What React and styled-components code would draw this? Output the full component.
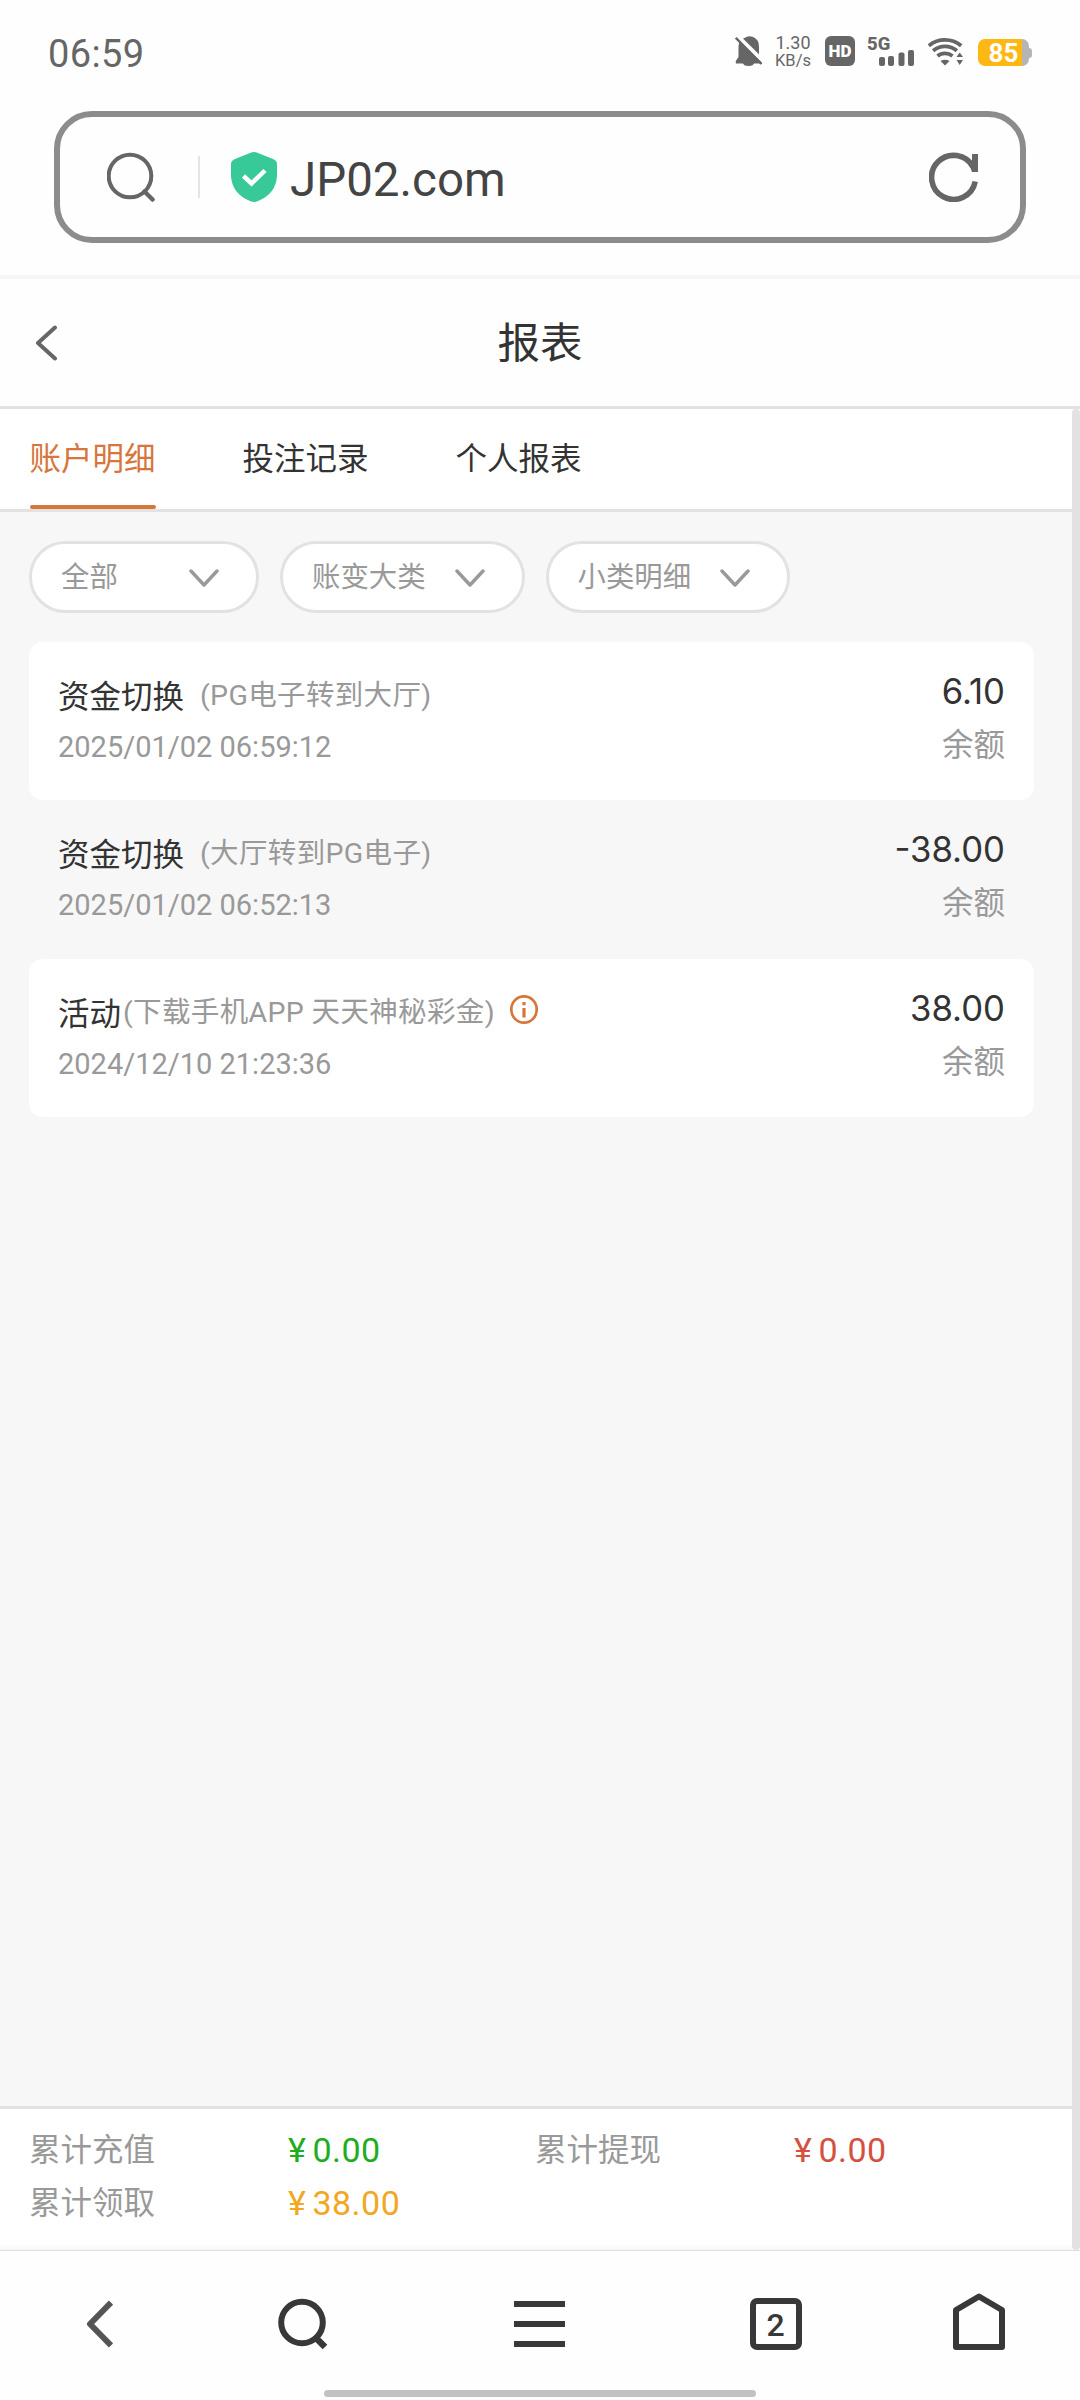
import React, { useState } from 'react';
import styled, { createGlobalStyle } from 'styled-components';

const GlobalStyle = createGlobalStyle`
    * {
        box-sizing: border-box;
    }
    body {
        margin: 0;
        background-color: #fefefe;
        font-family: Roboto, "Noto Sans CJK SC", sans-serif;
    }
    svg {
        display: block;
        flex-shrink: 0;
    }
    button {
        border: 0;
        padding: 0;
        background: none;
        font-family: inherit;
        cursor: pointer;
    }
`;

const Screen = styled.div`
    display: flex;
    flex-direction: column;
    width: 1080px;
    height: 2400px;
    overflow: hidden;
    white-space: nowrap;
`;

//Status bar
const StatusBar = styled.div`
    display: flex;
    justify-content: space-between;
    align-items: center;
    height: 102px;
    padding: 0 48px 0 48px;
    color: #666;
`;

const Clock = styled.div`
    padding-top: 5px;
    font-size: 38px;
    line-height: 40px;
    letter-spacing: 0.4px;
`;

const StatusIcons = styled.div`
    display: flex;
    align-items: center;
`;

const NetSpeed = styled.div`
    width: 38px;
    margin: 0 13px 0 11px;
    text-align: center;
    font-size: 16.5px;
    line-height: 17px;
    .speed-value {
        font-size: 18px;
        line-height: 18px;
    }
`;

const HdBadge = styled.div`
    width: 30px;
    height: 30px;
    margin-right: 12px;
    border-radius: 6px;
    background-color: #666;
    color: white;
    text-align: center;
    font-size: 17px;
    font-weight: 900;
    line-height: 31px;
`;

const Signal = styled.div`
    display: flex;
    flex-direction: column;
    align-items: flex-end;
    width: 47px;
    height: 30px;
    margin-right: 14px;
    .signal-type {
        align-self: flex-start;
        height: 14px;
        font-size: 18.5px;
        font-weight: 800;
        line-height: 16px;
    }
`;

const Battery = styled.div`
    display: flex;
    align-items: center;
    margin: 3px 0 0 14px;
    .battery-body {
        width: 51px;
        height: 27px;
        border-radius: 7px;
        background: linear-gradient(to right, #fdb813 44px, #b5b5b5 44px);
        color: white;
        text-align: center;
        font-size: 26px;
        font-weight: 700;
        line-height: 29px;
    }
    .battery-cap {
        width: 3px;
        height: 10px;
        border-radius: 0 3px 3px 0;
        background-color: #b5b5b5;
    }
`;

//Address bar
const AddressBar = styled.div`
    display: flex;
    align-items: center;
    flex-shrink: 0;
    height: 132px;
    margin: 9px 54px 32px;
    padding: 0 41px 0 47px;
    border: 6px solid #8c8c8c;
    border-radius: 38px;
`;

const Divider = styled.div`
    width: 2px;
    height: 42px;
    margin: 0 31px 0 43px;
    background-color: #e4e4e4;
`;

const Url = styled.div`
    flex: 1;
    padding: 6px 0 0 13px;
    color: #444;
    font-size: 47.5px;
    line-height: 56px;
`;

//Page
const PageHeader = styled.div`
    display: grid;
    grid-template-columns: 1fr auto 1fr;
    align-items: center;
    flex-shrink: 0;
    height: 134px;
    padding: 0 35px;
    border-top: 4px solid #f5f5f5;
    border-bottom: 3px solid #e2e2e2;
    color: #333;
    font-size: 42.5px;
    line-height: 50px;
    .page-title {
        padding-top: 2px;
    }
`;

const Page = styled.div`
    display: flex;
    flex: 1;
    min-height: 0;
`;

const PageBody = styled.div`
    display: flex;
    flex-direction: column;
    width: 1072px;
    background-color: #f7f7f7;
`;

const ScrollTrack = styled.div`
    width: 8px;
    border-radius: 4px;
    background-color: #e2e2e2;
`;

const Tabs = styled.div`
    display: flex;
    gap: 87px;
    height: 103px;
    padding-left: 29.5px;
    border-bottom: 3px solid #e2e2e2;
    background-color: #fff;
`;

const Tab = styled.button`
    display: flex;
    flex-direction: column;
    justify-content: space-between;
    height: 100px;
    padding-top: 31px;
    color: ${props => props.$active ? '#d6763b' : '#333'};
    font-size: 31.5px;
    line-height: 40px;
    &::after {
        content: "";
        width: 100%;
        height: 4px;
        border-radius: 2px;
        background-color: ${props => props.$active ? '#d6763b' : 'transparent'};
    }
`;

const Filters = styled.div`
    display: flex;
    gap: 21px;
    padding: 29px 29px 0;
`;

const Filter = styled.button`
    display: flex;
    justify-content: space-between;
    align-items: center;
    width: ${props => props.$width}px;
    height: 72px;
    padding: 1px 37px 0 29px;
    border: 3px solid #e2e2e2;
    border-radius: 36px;
    background-color: #fff;
    color: #999;
    font-size: 28.4px;
    line-height: 36px;
`;

const RecordList = styled.div`
    flex: 1;
    padding: 29px 38px 0 29px;
`;

const Record = styled.div`
    display: flex;
    justify-content: space-between;
    height: 158.3px;
    padding: 0 29px;
    border-radius: 14px;
    background-color: ${props => props.$plain ? 'transparent' : '#fff'};
    color: #999;
`;

const RecordInfo = styled.div`
    padding-top: 36px;
    font-size: 29px;
    line-height: 36px;
`;

const RecordTitle = styled.div`
    display: flex;
    height: 40px;
    margin-bottom: 11px;
    .record-name {
        color: #333;
        font-size: 31.5px;
        line-height: 40px;
    }
    .record-note {
        margin-left: ${props => props.$tight ? 2 : 16}px;
        font-size: 28.5px;
        letter-spacing: 0.35px;
    }
    svg {
        margin: 0 0 0 15px;
    }
`;

const RecordAmount = styled.div`
    padding-top: 29px;
    text-align: right;
    font-size: 31.5px;
    line-height: 40px;
    .record-value {
        margin-bottom: 15px;
        color: #333;
        font-family: Inter, sans-serif;
        font-size: 34.7px;
    }
`;

const Summary = styled.div`
    display: grid;
    grid-template-columns: repeat(4, 253px);
    align-content: start;
    row-gap: 13px;
    height: 144px;
    padding: 22px 0 0 29px;
    border-top: 3px solid #e2e2e2;
    background-color: #fff;
    box-shadow: inset 0 -8px 6px -6px rgba(0, 0, 0, 0.05);
    color: #999;
    font-size: 31.5px;
    line-height: 40px;
`;

const Money = styled.div`
    padding-left: 6px;
    color: ${props => props.$color};
    font-size: 34px;
    line-height: 38px;
    letter-spacing: 0.5px;
    .yen {
        margin-right: 6px;
    }
`;

//Browser toolbar
const Toolbar = styled.div`
    flex-shrink: 0;
    display: flex;
    flex-direction: column;
    justify-content: space-between;
    align-items: center;
    height: 150px;
    padding-bottom: 3px;
    border-top: 1px solid #dedede;
`;

const ToolbarButtons = styled.div`
    display: grid;
    grid-template-columns: 197px 211px 262px 211px 195px;
    align-items: center;
    justify-items: center;
    width: 100%;
    padding-top: 47px;
    svg:last-child {
        margin-top: -5px;
    }
`;

const TabCount = styled.button`
    width: 52px;
    height: 52px;
    border: 6px solid #383838;
    border-radius: 7px;
    color: #383838;
    font-size: 32px;
    font-weight: 500;
    line-height: 42px;
`;

const HomeIndicator = styled.div`
    width: 432px;
    height: 7px;
    border-radius: 4px;
    background-color: #c2c2c2;
`;

const BellOff = () => (
    <svg width="28" height="30" viewBox="0 0 28 30">
        <path d="M11 1.2Q14 -0.4 18 1Q24 3.5 24 10.500V19L27 24V27.500H19Q18 30 13.500 30T8 27.500H0.800V25L3.500 21V10Q3.500 4 11 1.200Z" fill="#666" />
        <path d="M1.500 -1L30 27" stroke="#fefefe" strokeWidth="4" />
        <path d="M0.800 1.800L26.500 28" stroke="#666" strokeWidth="2.400" />
    </svg>
);

const SignalBars = () => (
    <svg width="35" height="16" viewBox="0 0 35 16" fill="#666">
        <rect x="0" y="7" width="6" height="9" rx="2" />
        <rect x="9" y="6" width="6" height="10" rx="2" />
        <rect x="19.500" y="2.500" width="6" height="13.500" rx="2" />
        <rect x="29" y="0" width="6" height="16" rx="2" />
    </svg>
);

const Wifi = () => (
    <svg width="36" height="30" viewBox="0 0 36 30">
        <g fill="none" stroke="#666" strokeWidth="3.800">
            <path d="M0.800 9.700A25.200 25.200 0 0 1 33.200 9.700" />
            <path d="M5.100 14.800A18.500 18.500 0 0 1 28.900 14.800" />
            <path d="M9.500 20A11.700 11.700 0 0 1 24.500 20" />
        </g>
        <path d="M12.500 25Q17 22.500 21.500 25L17 29.500Z" fill="#666" />
        <path d="M27 21L31.500 14L37 21V24L31.500 31L27 24Z" fill="#fefefe" />
        <path d="M28.500 21L31.700 16.500L35 21ZM28.500 24L31.700 29L35 24Z" fill="#666" />
    </svg>
);

const SearchThin = () => (
    <svg width="48" height="50" viewBox="0 0 48 50" fill="none" stroke="#666" strokeWidth="4">
        <circle cx="23" cy="24" r="21.300" />
        <path d="M37.500 39.500L45.500 47.500" strokeWidth="4.500" strokeLinecap="round" />
    </svg>
);

const Shield = () => (
    <svg width="46" height="50" viewBox="0 0 46 50" fill="none">
        <path d="M19 1Q23 -0.800 27 1L42 7Q46 8.500 46 12V24Q45 42 26.500 49.200Q23 50.600 19.500 49.200Q1 42 0 24V12Q0 8.500 4 7Z" fill="#38c998" />
        <path d="M12.500 24L20.500 31.500L34 18.500" stroke="#fff" strokeWidth="4.500" />
    </svg>
);

const Reload = () => (
    <svg width="50" height="50" viewBox="0 0 50 50">
        <path d="M46.200 29.500A22 22 0 1 1 44 15" fill="none" stroke="#666" strokeWidth="5.600" />
        <path d="M43 2H49V20H43L40 12L43 10Z" fill="#666" />
    </svg>
);

const Back = () => (
    <svg width="22" height="36" viewBox="0 0 22 36" fill="none" stroke="#666" strokeWidth="4" strokeLinecap="round" strokeLinejoin="round">
        <path d="M20 2.500L3 18L20 33.500" />
    </svg>
);

const Chevron = () => (
    <svg width="30" height="18" viewBox="0 0 30 18" fill="none" stroke="#999" strokeWidth="3.400" strokeLinecap="round" strokeLinejoin="round">
        <path d="M2 2L15 16L28 2" />
    </svg>
);

const Info = () => (
    <svg width="28" height="30" viewBox="0 0 28 30" fill="none" stroke="#d6763b" strokeWidth="2.700">
        <ellipse cx="14" cy="14.500" rx="12.700" ry="13.200" />
        <path d="M14 7V10.300M14 13V22.500" strokeWidth="3.200" />
    </svg>
);

const NavBack = () => (
    <svg width="28" height="48" viewBox="0 0 28 48" fill="none" stroke="#555" strokeWidth="6" strokeLinejoin="round">
        <path d="M26 2.500L5 24L26 45.500" />
    </svg>
);

const NavSearch = () => (
    <svg width="50" height="52" viewBox="0 0 50 52" fill="none" stroke="#383838" strokeWidth="6">
        <circle cx="24" cy="24.500" r="20.800" />
        <path d="M38 40L47 49" strokeWidth="6.500" />
    </svg>
);

const NavMenu = () => (
    <svg width="51" height="46" viewBox="0 0 51 46" fill="#383838">
        <rect width="51" height="6" />
        <rect y="20" width="51" height="6" />
        <rect y="40" width="51" height="6" />
    </svg>
);

const NavHome = () => (
    <svg width="52" height="57" viewBox="0 0 52 57" fill="none" stroke="#383838" strokeWidth="6" strokeLinejoin="round">
        <path d="M26 3.500L49 17V54H3V17Z" />
    </svg>
);

const tabs = ['账户明细', '投注记录', '个人报表'];

const filters = [
    { label: '全部', width: 230 },
    { label: '账变大类', width: 244.5 },
    { label: '小类明细', width: 244.5 },
];

const records = [
    { name: '资金切换', note: '(PG电子转到大厅)', time: '2025/01/02 06:59:12', amount: '6.10' },
    { name: '资金切换', note: '(大厅转到PG电子)', time: '2025/01/02 06:52:13', amount: '-38.00' },
    { name: '活动', note: '(下载手机APP 天天神秘彩金)', time: '2024/12/10 21:23:36', amount: '38.00', info: true },
];

const totals = [
    { label: '累计充值', value: '0.00', color: '#1dad1d' },
    { label: '累计提现', value: '0.00', color: '#d4513f' },
    { label: '累计领取', value: '38.00', color: '#f2a722' },
];

const App = () => {
    const [active, setActive] = useState(0);

    return (
        <Screen>
            <GlobalStyle />
            <StatusBar>
                <Clock>06:59</Clock>
                <StatusIcons>
                    <BellOff />
                    <NetSpeed>
                        <div className="speed-value">1.30</div>
                        <div>KB/s</div>
                    </NetSpeed>
                    <HdBadge>HD</HdBadge>
                    <Signal>
                        <span className="signal-type">5G</span>
                        <SignalBars />
                    </Signal>
                    <Wifi />
                    <Battery>
                        <div className="battery-body">85</div>
                        <div className="battery-cap" />
                    </Battery>
                </StatusIcons>
            </StatusBar>
            <AddressBar>
                <SearchThin />
                <Divider />
                <Shield />
                <Url>JP02.com</Url>
                <Reload />
            </AddressBar>
            <PageHeader>
                <Back />
                <span className="page-title">报表</span>
            </PageHeader>
            <Page>
                <PageBody>
                    <Tabs>
                        {tabs.map((tab, i) => (
                            <Tab key={tab} $active={i === active} onClick={() => setActive(i)}>{tab}</Tab>
                        ))}
                    </Tabs>
                    <Filters>
                        {filters.map(filter => (
                            <Filter key={filter.label} $width={filter.width}>
                                {filter.label}
                                <Chevron />
                            </Filter>
                        ))}
                    </Filters>
                    <RecordList>
                        {records.map((record, i) => (
                            <Record key={record.time} $plain={i % 2 === 1}>
                                <RecordInfo>
                                    <RecordTitle $tight={record.info}>
                                        <span className="record-name">{record.name}</span>
                                        <span className="record-note">{record.note}</span>
                                        {record.info && <Info />}
                                    </RecordTitle>
                                    <div>{record.time}</div>
                                </RecordInfo>
                                <RecordAmount>
                                    <div className="record-value">{record.amount}</div>
                                    <div>余额</div>
                                </RecordAmount>
                            </Record>
                        ))}
                    </RecordList>
                    <Summary>
                        {totals.map(total => (
                            <React.Fragment key={total.label}>
                                <span>{total.label}</span>
                                <Money $color={total.color}><span className="yen">¥</span>{total.value}</Money>
                            </React.Fragment>
                        ))}
                    </Summary>
                </PageBody>
                <ScrollTrack />
            </Page>
            <Toolbar>
                <ToolbarButtons>
                    <NavBack />
                    <NavSearch />
                    <NavMenu />
                    <TabCount>2</TabCount>
                    <NavHome />
                </ToolbarButtons>
                <HomeIndicator />
            </Toolbar>
        </Screen>
    );
};

export default App;
